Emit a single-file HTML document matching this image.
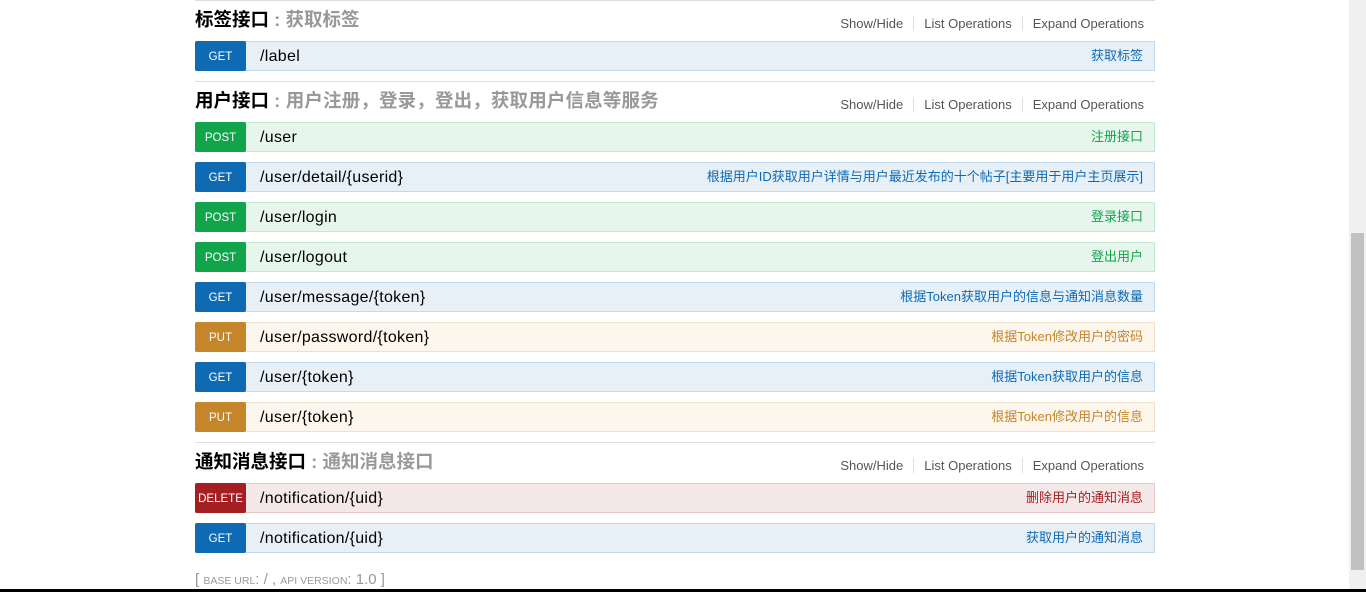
<!DOCTYPE html>
<html><head><meta charset="utf-8"><style>
body{margin:0;width:1366px;height:592px;overflow:hidden;background:#fff;font-family:"Liberation Sans","Noto Sans CJK SC",sans-serif;position:relative}
.hr{position:absolute;left:195px;width:960px;height:1px;background:#ddd}
.h{position:absolute;left:195px;font-size:18.5px;font-weight:bold;color:#000;line-height:24px}
.h span{color:#999}
.ops{position:absolute;left:830px;width:322px;font-size:13px;color:#555;text-align:right;line-height:16px}
.ops i{font-style:normal;padding:0 10px;border-right:1px solid #ddd}
.ops i:last-child{border:none;padding-right:8px}
.r{position:absolute;left:195px;width:958px;height:28px;border:1px solid}
.b{position:absolute;left:-1px;top:-1px;width:51px;height:30px;border-radius:2px;color:#fff;font-size:11.5px;text-align:center;line-height:33px}
.p{position:absolute;left:64px;top:1px;line-height:28px;font-size:16px;letter-spacing:0.3px;color:#000}
.d{position:absolute;right:11px;top:0;line-height:28px;font-size:13px}
.g{background:#e7f0f7;border-color:#c3d9ec}.g .b{background:#0f6ab4}.g .d{color:#0f6ab4}
.po{background:#e7f6ec;border-color:#c3e8d1}.po .b{background:#10a54a}.po .d{color:#10a54a}
.pu{background:#fcf6ed;border-color:#f0e0ca}.pu .b{background:#c5862b}.pu .d{color:#c5862b}
.de{background:#f5e8e8;border-color:#e8c6c7}.de .b{background:#a41e22}.de .d{color:#a41e22}
</style></head><body>
<div class="hr" style="top:0"></div>
<div class="h" style="top:8px">标签接口 <span>: 获取标签</span></div>
<div class="ops" style="top:16px"><i>Show/Hide</i><i>List Operations</i><i>Expand Operations</i></div>
<div class="r g" style="top:41px"><div class="b">GET</div><div class="p">/label</div><div class="d">获取标签</div></div>
<div class="hr" style="top:81px"></div>
<div class="h" style="top:89px">用户接口 <span style="letter-spacing:0.15px">: 用户注册，登录，登出，获取用户信息等服务</span></div>
<div class="ops" style="top:97px"><i>Show/Hide</i><i>List Operations</i><i>Expand Operations</i></div>
<div class="r po" style="top:122px"><div class="b">POST</div><div class="p">/user</div><div class="d">注册接口</div></div>
<div class="r g" style="top:162px"><div class="b">GET</div><div class="p">/user/detail/{userid}</div><div class="d">根据用户ID获取用户详情与用户最近发布的十个帖子[主要用于用户主页展示]</div></div>
<div class="r po" style="top:202px"><div class="b">POST</div><div class="p">/user/login</div><div class="d">登录接口</div></div>
<div class="r po" style="top:242px"><div class="b">POST</div><div class="p">/user/logout</div><div class="d">登出用户</div></div>
<div class="r g" style="top:282px"><div class="b">GET</div><div class="p">/user/message/{token}</div><div class="d">根据Token获取用户的信息与通知消息数量</div></div>
<div class="r pu" style="top:322px"><div class="b">PUT</div><div class="p">/user/password/{token}</div><div class="d">根据Token修改用户的密码</div></div>
<div class="r g" style="top:362px"><div class="b">GET</div><div class="p">/user/{token}</div><div class="d">根据Token获取用户的信息</div></div>
<div class="r pu" style="top:402px"><div class="b">PUT</div><div class="p">/user/{token}</div><div class="d">根据Token修改用户的信息</div></div>
<div class="hr" style="top:442px"></div>
<div class="h" style="top:450px">通知消息接口 <span>: 通知消息接口</span></div>
<div class="ops" style="top:458px"><i>Show/Hide</i><i>List Operations</i><i>Expand Operations</i></div>
<div class="r de" style="top:483px"><div class="b">DELETE</div><div class="p">/notification/{uid}</div><div class="d">删除用户的通知消息</div></div>
<div class="r g" style="top:523px"><div class="b">GET</div><div class="p">/notification/{uid}</div><div class="d">获取用户的通知消息</div></div>
<div style="position:absolute;left:195px;top:571px;font-size:15px;color:#999">[ <span style="font-size:10.5px">BASE URL</span>: / , <span style="font-size:10.5px">API VERSION</span>: 1.0 ]</div>
<div style="position:absolute;left:1349px;top:0;width:17px;height:589px;background:#f0f0f0"></div>
<div style="position:absolute;left:1351px;top:233px;width:13px;height:337px;background:#c1c1c1"></div>
<div style="position:absolute;left:0;top:589px;width:1366px;height:3px;background:#000"></div>
</body></html>
